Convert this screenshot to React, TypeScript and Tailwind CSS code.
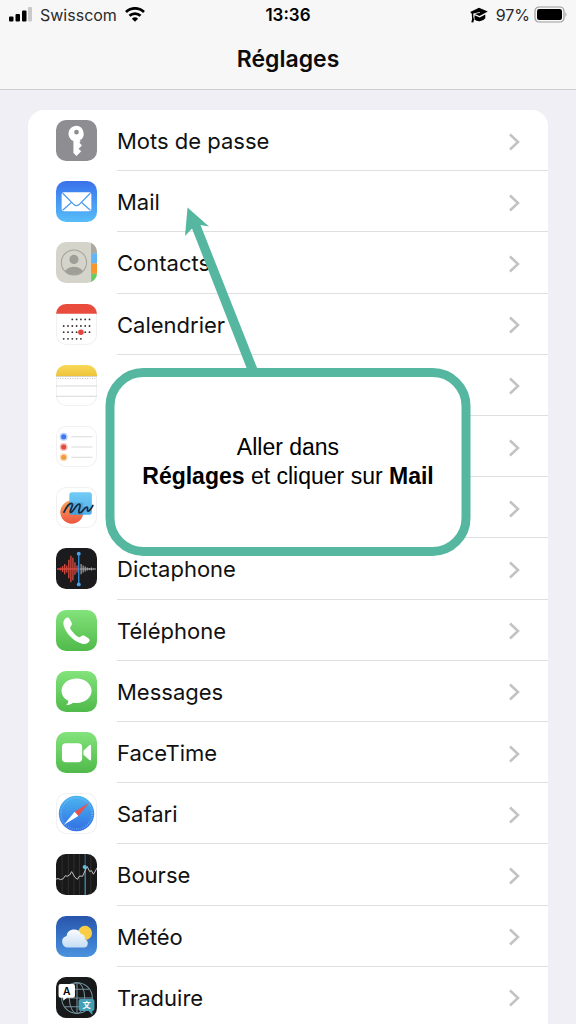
import React from 'react';

interface SettingsItem {
  name: string;
  icon: React.ReactNode;
  className: string;
}

const KeyIcon = () => (
  <svg viewBox="0 0 40 40" className="size-full" aria-hidden="true">
    <path
      fill="#fff"
      fillRule="evenodd"
      d="M20 5.5a7.8 7.8 0 0 0-3 15v11.7l3 3 4.6-4.6-2.6-2.6 3.4-3.2-2.6-2.6 1.2-1.3-.9-.9A7.8 7.8 0 0 0 20 5.5zM20 9.6a2.3 2.3 0 1 1 0 4.6 2.3 2.3 0 0 1 0-4.6z"
    />
  </svg>
);

const MailIcon = () => (
  <svg viewBox="0 0 40 40" className="size-full" aria-hidden="true">
    <rect x="5.5" y="11" width="29" height="18.5" rx="2.2" fill="#fff" />
    <path d="M6.5 12 17.5 23q2.500 2.200 5 0L33.5 12M6.500 28.500l9-8M33.500 28.500l-9-8" fill="none" stroke="#4c98f3" strokeWidth="1.2" />
  </svg>
);

const ContactsIcon = () => (
  <svg viewBox="0 0 40 40" className="size-full" aria-hidden="true">
    <rect x="35" width="5" height="11" fill="#aaa9a1" />
    <rect x="35" y="11" width="5" height="10" fill="#61b5f5" />
    <rect x="35" y="21" width="5" height="10" fill="#f8962c" />
    <rect x="35" y="31" width="5" height="9" fill="#67cb64" />
    <rect x="34.2" width="0.9" height="40" fill="#a9a89c" />
    <clipPath id="contact-clip">
      <circle cx="17.5" cy="20" r="12" />
    </clipPath>
    <circle cx="17.5" cy="20" r="12.3" fill="none" stroke="#a3a299" strokeWidth="1" />
    <g fill="#a09f97" clipPath="url(#contact-clip)">
      <circle cx="17.5" cy="17" r="4.500" />
      <ellipse cx="17.5" cy="31" rx="9.500" ry="6.800" />
    </g>
  </svg>
);

const calendarRows = [
  { y: 15, from: 2, to: 6 },
  { y: 21.5, from: 0, to: 6 },
  { y: 27.5, from: 0, to: 6 },
  { y: 34, from: 0, to: 4 },
];

const CalendarIcon = () => (
  <svg viewBox="0 0 40 40" className="size-full" aria-hidden="true">
    <rect width="40" height="9.5" fill="#e94b3c" />
    {calendarRows.map((row) =>
      [0, 1, 2, 3, 4, 5, 6]
        .filter((col) => col >= row.from && col <= row.to)
        .map((col) => <circle key={`${row.y}-${col}`} cx={7.5 + col * 4.2} cy={row.y} r="0.9" fill="#3a3035" />)
    )}
    <circle cx="24.3" cy="27.5" r="2.7" fill="#e5463e" />
  </svg>
);

const NotesIcon = () => (
  <svg viewBox="0 0 40 40" className="size-full" aria-hidden="true">
    <defs>
      <linearGradient id="notes-top" x2="0" y2="1">
        <stop stopColor="#f8d958" />
        <stop offset="1" stopColor="#efc23a" />
      </linearGradient>
    </defs>
    <rect width="40" height="11" fill="url(#notes-top)" />
    <path d="M0 11.2h40M0 20.5h40M0 30.5h40" stroke="#c9c8c6" strokeWidth="0.7" />
    <path d="M1.500 13.200h38" stroke="#b5b5b2" strokeWidth="0.9" strokeDasharray="0.9 1.5" />
  </svg>
);

const RemindersIcon = () => (
  <svg viewBox="0 0 40 40" className="size-full" aria-hidden="true">
    <path d="M15 10.5h20.5M15 20.5h20.5M15 30.5h20.5" stroke="#cbcbcb" strokeWidth="0.7" />
    {[
      { y: 10.5, color: '#3f78ed' },
      { y: 20.5, color: '#e14c42' },
      { y: 30.5, color: '#ef9d3a' },
    ].map((dot) => (
      <g key={dot.y} fill={dot.color}>
        <circle cx="7.5" cy={dot.y} r="3.9" opacity="0.35" />
        <circle cx="7.5" cy={dot.y} r="2.5" />
      </g>
    ))}
  </svg>
);

const FreeformIcon = () => (
  <svg viewBox="0 0 40 40" className="size-full" aria-hidden="true">
    <defs>
      <linearGradient id="freeform-orange" x2="0" y2="1">
        <stop stopColor="#f9a45a" />
        <stop offset="1" stopColor="#ee5540" />
      </linearGradient>
      <linearGradient id="freeform-blue" x2="0" y2="1">
        <stop stopColor="#72cbf5" />
        <stop offset="1" stopColor="#52aeea" />
      </linearGradient>
    </defs>
    <circle cx="15.5" cy="24.5" r="11.3" fill="url(#freeform-orange)" />
    <rect x="13" y="5" width="22" height="22" rx="2.5" fill="url(#freeform-blue)" />
    <path d="M13 15h13.5v12H13z" fill="#3c80b8" opacity="0.35" />
    <path
      d="M7.8 24.5c2-4.2 5.500-9.200 7.600-8.300 2.400 1-3.200 8.400-1 8.500 2.500.1 5.500-8.500 8.400-7.900 2.400.6-2.300 7.900.2 8.500 2.600.6 4.500-6 7.200-5.600 1.600.4-.5 4 1.200 3.900 1.700-.2 3.300-3.200 4.600-5.600"
      fill="none"
      stroke="#172d43"
      strokeWidth="1.7"
      strokeLinecap="round"
    />
  </svg>
);

const VoiceIcon = () => (
  <svg viewBox="0 0 40 40" className="size-full" aria-hidden="true">
    <g stroke="#d34a40" strokeWidth="1.3">
      <path d="M4.500 19v3M6.500 17.500v6M8.500 15.500v10M10.500 17v7M12.500 11.500v18M14.500 7.500v26M16.500 9.500v22M18.500 14v12M20.500 17v7" />
      <path d="M1 20.500h21" />
    </g>
    <path d="M24.5 15.5v10M26.500 17v7M28.500 18v5M30.500 19v3M32.500 19.500v2M34.500 19v3M36.500 19.800v1.500M23 20.500h16" stroke="#a9a9ad" strokeWidth="1.1" />
    <path d="M22.200 5.500v30" stroke="#3b98e8" strokeWidth="1.2" />
    <circle cx="22.2" cy="5.5" r="1.9" fill="#4ba5ee" />
    <circle cx="22.2" cy="35.5" r="1.9" fill="#4ba5ee" />
  </svg>
);

const PhoneIcon = () => (
  <svg viewBox="0 0 40 40" className="size-full" aria-hidden="true">
    <path
      fill="#fff"
      d="M9.200 8.200c1.500-1.400 3.300-1.100 4.300.8l1.700 3.400c.7 1.500.2 2.500-.8 3.600-.8.9-.8 1.600-.1 2.800 1.700 2.800 4.200 5.500 7.100 7.200 1.200.7 1.900.6 2.800-.2 1.100-1 2.200-1.400 3.600-.6l3.500 2c1.700 1.100 2 2.600.7 4.100-2.200 2.400-5.500 2.200-9.100.6C15.600 28.700 10.300 23 7.800 16c-1.100-3.100-.8-5.900 1.400-7.800z"
    />
  </svg>
);

const MessagesIcon = () => (
  <svg viewBox="0 0 40 40" className="size-full" aria-hidden="true">
    <path fill="#fff" d="M20 7.200c-8.200 0-14.600 5.300-14.600 12 0 4.200 2.600 7.900 6.700 10-.2 1.600-1 2.900-2.200 4 2.700-.1 4.900-1 6.700-2.300 1.100.2 2.300.3 3.400.3 8.200 0 14.700-5.300 14.700-12S28.200 7.200 20 7.200z" />
  </svg>
);

const FaceTimeIcon = () => (
  <svg viewBox="0 0 40 40" className="size-full" aria-hidden="true">
    <rect x="5.8" y="11" width="19.7" height="18.5" rx="4" fill="#fff" />
    <path d="M26.800 18.300 32.500 13q1.700-1.200 1.700.7v13q0 1.900-1.700.7l-5.700-5.200z" fill="#fff" />
  </svg>
);

const SafariIcon = () => (
  <svg viewBox="0 0 40 40" className="size-full" aria-hidden="true">
    <defs>
      <linearGradient id="safari-blue" x2="0" y2="1">
        <stop stopColor="#4cb5ee" />
        <stop offset="1" stopColor="#306fe4" />
      </linearGradient>
    </defs>
    <circle cx="20" cy="20" r="17.3" fill="url(#safari-blue)" />
    <circle cx="20" cy="20" r="15.3" fill="none" stroke="#8cc3f3" strokeWidth="1.6" strokeDasharray="0.5 1.5" />
    <path d="M32.300 9.500 21.800 22.400 18.200 18.200z" fill="#e7524c" />
    <path d="M7.700 31 18.200 18.200l3.600 4.200z" fill="#fff" />
  </svg>
);

const StocksIcon = () => (
  <svg viewBox="0 0 40 40" className="size-full" aria-hidden="true">
    <path d="M6 0v40M12 0v40M17.500 0v40M23 0v40M34 0v40" stroke="#38383a" strokeWidth="0.7" />
    <path d="M28.500 12v28" stroke="#3b8dae" strokeWidth="1.3" />
    <path d="M28.500 0v12" stroke="#2b5a72" strokeWidth="1.3" />
    <path
      d="M0 24.500l2-.5 2.500 1 2.500-.8 2-3 2 .5 2.300-1.200 2-3.300 3 5.300 2.600 2.200 2-3.200 3 .2 3-6.500 1.500-3 2.500 5 1.600-1 2 3.500 2-3.200L40 13.500"
      fill="none"
      stroke="#cfcfcf"
      strokeWidth="0.9"
    />
    <circle cx="28" cy="12.7" r="2" fill="#63bde0" />
  </svg>
);

const WeatherIcon = () => (
  <svg viewBox="0 0 40 40" className="size-full" aria-hidden="true">
    <defs>
      <linearGradient id="cloud" x2="0" y2="1">
        <stop stopColor="#fbfcfe" />
        <stop offset="1" stopColor="#c5ddf5" />
      </linearGradient>
    </defs>
    <circle cx="28.3" cy="16.5" r="6.9" fill="#f9ce46" />
    <path d="M11.500 30.800a5.800 5.800 0 0 1-1.200-11.400 7.400 7.400 0 0 1 13.900-2.200 5 5 0 0 1 4 5.500 4.200 4.200 0 0 1-.7 8.100z" fill="url(#cloud)" />
  </svg>
);

const TranslateIcon = () => (
  <svg viewBox="0 0 40 40" className="size-full" aria-hidden="true">
    <g fill="none" stroke="#76929e" strokeWidth="1">
      <circle cx="20.5" cy="20.5" r="15" />
      <ellipse cx="20.5" cy="20.5" rx="7.5" ry="15" />
      <path d="M20.500 5.500v30M5.500 20.500h30M8.500 12h24M8.500 29h24" />
    </g>
    <path d="M4.500 6.800h12q2 0 2 2v9.400q0 2-2 2h-6l-3.500 3v-3H4.500q-2 0-2-2V8.800q0-2 2-2z" fill="#fff" />
    <path d="M24 21.500h11.500q2 0 2 2v7.700q0 2-2 2V37l-3.700-3.800H24q-2 0-2-2v-7.700q0-2 2-2z" fill="#459fb5" />
    <text x="10.5" y="17.3" textAnchor="middle" fontSize="10" fontWeight="600" className="fill-black font-['Inter',sans-serif]">A</text>
    <text x="29.8" y="30.5" textAnchor="middle" fontSize="8" fontWeight="700" className="fill-white font-['Noto_Sans_CJK_SC',sans-serif]">文</text>
  </svg>
);

const whiteTile = 'bg-white ring-1 ring-inset ring-[#f1f1f1]';
const greenTile = 'bg-linear-to-b from-[#83e37c] to-[#4fba49]';

const items: SettingsItem[] = [
  { name: 'Mots de passe', icon: <KeyIcon />, className: 'bg-[#8e8d92]' },
  { name: 'Mail', icon: <MailIcon />, className: 'bg-linear-to-b from-[#3b70eb] to-[#57bdf8]' },
  { name: 'Contacts', icon: <ContactsIcon />, className: 'bg-[#d5d4ca]' },
  { name: 'Calendrier', icon: <CalendarIcon />, className: whiteTile },
  { name: 'Notes', icon: <NotesIcon />, className: whiteTile },
  { name: 'Rappels', icon: <RemindersIcon />, className: whiteTile },
  { name: 'Freeform', icon: <FreeformIcon />, className: whiteTile },
  { name: 'Dictaphone', icon: <VoiceIcon />, className: 'bg-[#1b1b1d]' },
  { name: 'Téléphone', icon: <PhoneIcon />, className: greenTile },
  { name: 'Messages', icon: <MessagesIcon />, className: greenTile },
  { name: 'FaceTime', icon: <FaceTimeIcon />, className: greenTile },
  { name: 'Safari', icon: <SafariIcon />, className: whiteTile },
  { name: 'Bourse', icon: <StocksIcon />, className: 'bg-[#19191a]' },
  { name: 'Météo', icon: <WeatherIcon />, className: 'bg-linear-to-b from-[#2855ac] to-[#4a92df]' },
  { name: 'Traduire', icon: <TranslateIcon />, className: 'bg-[#18191b]' },
];

const StatusBar = () => (
  <div className="grid grid-cols-3 items-center h-[30px] px-2 text-base text-[#2a2a2c]">
    <div className="flex items-center gap-2">
      <svg viewBox="0 0 24 16" className="w-6 h-4" aria-hidden="true">
        <rect x="1" y="9.5" width="4.500" height="5" rx="1" />
        <rect x="7.5" y="7" width="4.500" height="7.500" rx="1" />
        <rect x="14" y="3.5" width="4.500" height="11" rx="1" />
        <rect x="20" y="0" width="4" height="14.500" rx="1" fill="#c9c9cb" />
      </svg>
      <span>Swisscom</span>
      <svg viewBox="0 0 20 16" className="w-5 h-4" fill="none" stroke="#000" strokeWidth="2.7" aria-hidden="true">
        <path d="M1 5a12.800 12.800 0 0 1 18 0" />
        <path d="M4.500 8.800a7.800 7.800 0 0 1 11 0" />
        <path d="M10 14.800 6.900 11.700a4.500 4.500 0 0 1 6.200 0z" fill="#000" stroke="none" />
      </svg>
    </div>
    <span className="pt-px text-center text-[17px] font-semibold text-black">13:36</span>
    <div className="flex items-center justify-end gap-1">
      <svg viewBox="0 0 18 16" className="w-[18px] h-4 mr-1" aria-hidden="true">
        <path d="M9 .8 17.800 4.600 9.500 9 4.800 7l5.200-1.200-.3-.8L3.300 6.500v3.300l.8 2.700-.8 3-2-.3.8-3-.3-5.400L.2 5z" />
        <path d="M4.500 8.200l5.200 2.200 5.600-3v3.800q-1.800 2.700-5.600 3-3.200.2-5.200-1.600z" />
      </svg>
      <span>97%</span>
      <svg viewBox="0 0 34 18" className="w-[34px] h-[18px]" aria-hidden="true">
        <rect x="1" y="1" width="29" height="15" rx="4" fill="none" stroke="#9b9b9d" strokeWidth="1.2" />
        <rect x="3" y="3" width="25" height="11" rx="2.2" />
        <path d="M31.500 6q2 2.500 0 5z" fill="#9b9b9d" />
      </svg>
    </div>
  </div>
);

const Callout = () => (
  <div className="absolute top-[368px] left-1/2 -translate-x-1/2 w-[365px] h-[188px]">
    <svg viewBox="0 0 74 164" className="absolute left-[79px] bottom-[187px] w-[74px] h-[164px]" fill="#55b7a0" aria-hidden="true">
      <path d="M3 2.500 24.500 21.500l-8.500-1.500L73 164H62.500L7.500 23.500.5 31z" />
    </svg>
    <div className="flex items-center justify-center size-full bg-white border-9 border-[#55b7a0] rounded-[38px]">
      <p className="text-center font-['Liberation_Sans',sans-serif] text-[23px] leading-[29px] text-black">
        Aller dans
        <br />
        <b>Réglages</b> et cliquer sur <b>Mail</b>
      </p>
    </div>
  </div>
);

const App: React.FC = () => {
  return (
    <div className="relative h-screen overflow-hidden bg-[#f0eff5] font-['Inter',sans-serif]">
      <header className="h-[90px] bg-[#f7f7f8] border-b border-[#cfcfd1]">
        <StatusBar />
        <h1 className="pt-[13px] text-center text-[23px] leading-8 font-semibold text-[#0c0c0d]">Réglages</h1>
      </header>

      <main className="px-7 pt-5">
        <ul className="grid auto-rows-fr min-h-[918px] bg-white rounded-t-2xl">
          {items.map((item) => (
            <li key={item.name}>
              <button type="button" className="flex items-center w-full h-full pl-7 text-left">
                <span className={`shrink-0 size-[41px] mr-5 rounded-[10px] overflow-hidden ${item.className}`}>
                  {item.icon}
                </span>
                <span className="flex flex-1 items-center justify-between h-full pt-[3px] pr-7 border-b border-[#dfdfe1] text-[22px] text-[#111]">
                  {item.name}
                  <svg viewBox="0 0 12 18" className="w-3 h-[18px]" fill="none" stroke="#c2c2c5" strokeWidth="2.5" aria-hidden="true">
                    <path d="M2 1.500 10 9l-8 7.500" />
                  </svg>
                </span>
              </button>
            </li>
          ))}
        </ul>
      </main>

      <Callout />
    </div>
  );
};

export default App;
